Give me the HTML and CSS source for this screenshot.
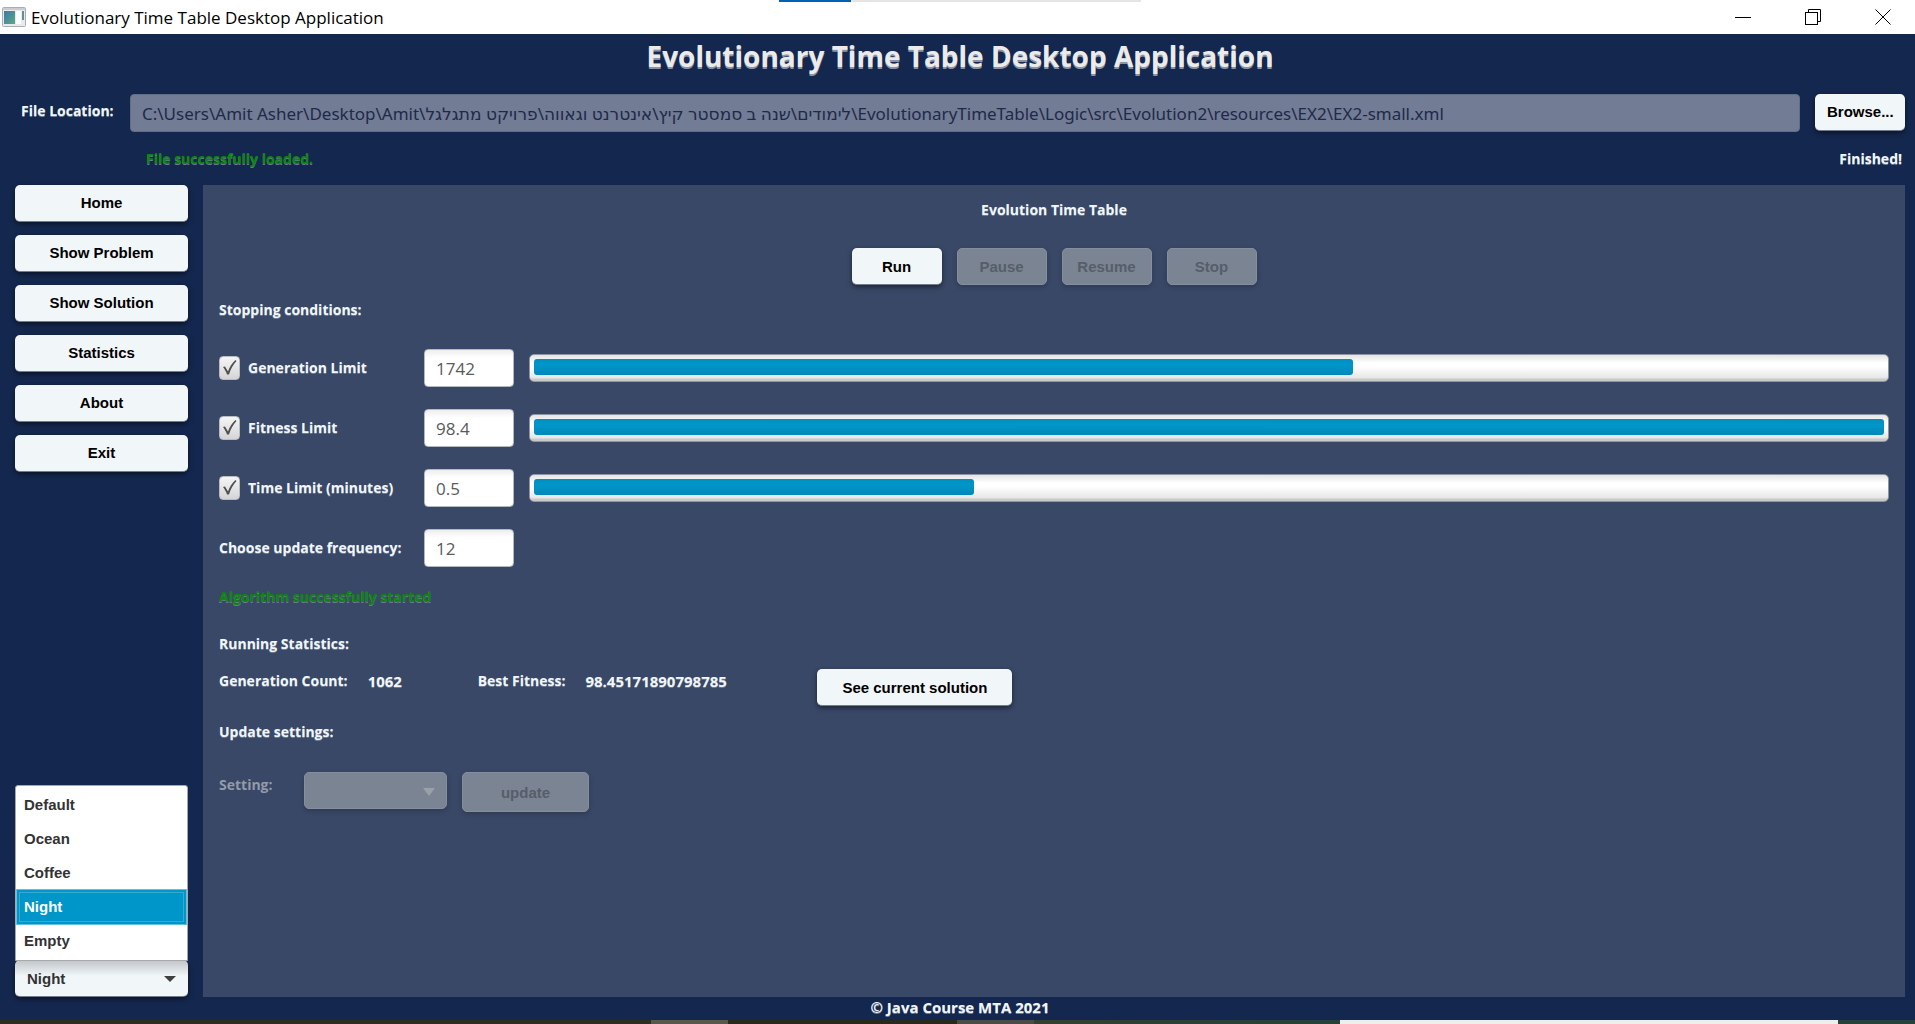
FILE: index.html
```html
<!DOCTYPE html>
<html lang="en">
<head>
<meta charset="utf-8">
<title>Evolutionary Time Table Desktop Application</title>
<link rel="stylesheet" href="styles.css">
</head>
<body>
<div class="window">
  <header class="titlebar">
    <svg class="app-icon" width="24" height="20" viewBox="0 0 24 20" aria-hidden="true">
      <rect x="0.5" y="0.5" width="23" height="19" rx="1" fill="#e9eaec" stroke="#a9adb3"/>
      <rect x="1" y="1" width="22" height="2" fill="#c9ccd2"/>
      <rect x="2" y="4" width="11" height="13" fill="url(#pane)"/>
      <rect x="14" y="4" width="5" height="13" fill="#fff"/>
      <rect x="20" y="4" width="2" height="9" fill="#5f8fa0"/>
      <defs><linearGradient id="pane" x1="0" y1="0" x2="1" y2="1"><stop offset="0" stop-color="#3d78a8"/><stop offset="1" stop-color="#58ab84"/></linearGradient></defs>
    </svg>
    <span class="titlebar-text">Evolutionary Time Table Desktop Application</span>
    <div class="loading"><div class="loading-value"></div></div>
    <div class="window-controls">
      <button class="window-button" type="button" aria-label="Minimize"><svg width="16" height="16" viewBox="0 0 16 16"><path d="M0 8.5H16" stroke="#000"/></svg></button>
      <button class="window-button" type="button" aria-label="Restore"><svg width="16" height="16" viewBox="0 0 16 16" fill="none" stroke="#000"><rect x="0.5" y="3.5" width="12" height="12"/><path d="M3.500 3.500V0.500H15.500V12.500H12.500"/></svg></button>
      <button class="window-button" type="button" aria-label="Close"><svg width="16" height="16" viewBox="0 0 16 16"><path d="M0.500 0.500L15.500 15.500M15.500 0.500L0.500 15.500" stroke="#000"/></svg></button>
    </div>
  </header>

  <div class="app">
    <h1 class="heading">Evolutionary Time Table Desktop Application</h1>

    <div class="file-row">
      <label class="label" for="file">File Location:</label>
      <input class="field file-field" id="file" type="text" disabled value="C:\Users\Amit Asher\Desktop\Amit\לימודים\שנה ב סמסטר קיץ\אינטרנט וגאווה\פרויקט מתגלגל\EvolutionaryTimeTable\Logic\src\Evolution2\resources\EX2\EX2-small.xml">
      <button class="button browse" type="button">Browse...</button>
    </div>
    <div class="status-row">
      <span class="label success">File successfully loaded.</span>
      <span class="label">Finished!</span>
    </div>

    <div class="body">
      <nav class="sidebar">
        <button class="button" type="button">Home</button>
        <button class="button" type="button">Show Problem</button>
        <button class="button" type="button">Show Solution</button>
        <button class="button" type="button">Statistics</button>
        <button class="button" type="button">About</button>
        <button class="button" type="button">Exit</button>
        <div class="theme">
          <select class="button theme-select" aria-label="Theme">
            <option>Default</option>
            <option>Ocean</option>
            <option>Coffee</option>
            <option selected>Night</option>
            <option>Empty</option>
          </select>
          <svg class="arrow" width="12" height="6" viewBox="0 0 12 6" aria-hidden="true"><path d="M0 0H12L6 6Z" fill="#404040"/></svg>
          <ul class="theme-menu" role="listbox" aria-label="Themes">
            <li class="theme-item" role="option">Default</li>
            <li class="theme-item" role="option">Ocean</li>
            <li class="theme-item" role="option">Coffee</li>
            <li class="theme-item selected" role="option" aria-selected="true">Night</li>
            <li class="theme-item" role="option">Empty</li>
          </ul>
        </div>
      </nav>

      <main class="panel">
        <h2 class="label panel-title">Evolution Time Table</h2>
        <div class="actions">
          <button class="button" type="button">Run</button>
          <button class="button" type="button" disabled>Pause</button>
          <button class="button" type="button" disabled>Resume</button>
          <button class="button" type="button" disabled>Stop</button>
        </div>
        <h3 class="label">Stopping conditions:</h3>

        <div class="limits">
          <label class="check label"><input class="checkbox" type="checkbox" checked>Generation Limit</label>
          <input class="field" type="text" value="1742" aria-label="Generation limit value">
          <div class="bar" role="progressbar" aria-label="Generations"><div class="bar-value" style="width:60.7%"></div></div>

          <label class="check label"><input class="checkbox" type="checkbox" checked>Fitness Limit</label>
          <input class="field" type="text" value="98.4" aria-label="Fitness limit value">
          <div class="bar" role="progressbar" aria-label="Fitness"><div class="bar-value" style="width:100%"></div></div>

          <label class="check label"><input class="checkbox" type="checkbox" checked>Time Limit (minutes)</label>
          <input class="field" type="text" value="0.5" aria-label="Time limit value">
          <div class="bar" role="progressbar" aria-label="Time"><div class="bar-value" style="width:32.6%"></div></div>

          <label class="label" for="frequency">Choose update frequency:</label>
          <input class="field" id="frequency" type="text" value="12">
        </div>

        <p class="label success started">Algorithm successfully started</p>

        <h3 class="label">Running Statistics:</h3>
        <div class="stats">
          <span class="label stat-name">Generation Count:</span>
          <span class="label stat-count">1062</span>
          <span class="label stat-name">Best Fitness:</span>
          <span class="label stat-fitness">98.45171890798785</span>
          <button class="button solution" type="button">See current solution</button>
        </div>

        <h3 class="label">Update settings:</h3>
        <div class="settings">
          <label class="label setting-label" for="setting">Setting:</label>
          <div class="setting-box">
            <select class="button setting-select" id="setting" disabled><option></option></select>
            <svg class="arrow" width="12" height="8" viewBox="0 0 12 8" aria-hidden="true"><path d="M0 0H12L6 8Z" fill="#99a0a9"/></svg>
          </div>
          <button class="button update" type="button" disabled>update</button>
        </div>
      </main>
    </div>

    <footer class="label footer">© Java Course MTA 2021</footer>
  </div>
  <div class="desktop-edge"></div>
</div>
</body>
</html>
```
FILE: styles.css
```css
* { box-sizing: border-box; }

body {
  margin: 0;
  font-family: "Open Sans", "Noto Sans", sans-serif;
  color: #f1f6f9;
  background: #14274e;
}

.window { display: flex; flex-direction: column; min-height: 100vh; }

.titlebar {
  position: relative;
  display: flex;
  align-items: center;
  height: 34px;
  padding-left: 2px;
  background: #fff;
  color: #000;
}
.titlebar-text { flex: 1; padding-left: 5px; font-size: 17px; }
.app-icon { flex: none; }
.loading { position: absolute; top: 0; left: 50%; width: 362px; height: 2px; margin-left: -179px; background: #e5e5e5; }
.loading-value { width: 20%; height: 100%; background: #0063b1; }
.window-controls { display: flex; gap: 6px; }
.window-button { width: 64px; height: 34px; padding: 0; border: 0; background: none; }
.window-button svg { display: block; margin: 0 auto; }

.app { flex: 1; display: flex; flex-direction: column; padding: 0 10px 0 15px; }

.heading { margin: 0; height: 60px; font-size: 28px; line-height: 44px; text-align: center; color: #ebebeb; text-shadow: 0 2px #8a93a6; }

.label { margin: 0; font-size: 14px; line-height: 20px; font-weight: bold; text-shadow: 0 1px #6d7a92; }
.success { color: #0a870a; }

.file-row { display: flex; align-items: flex-start; gap: 15px; }
.file-row .label { width: 100px; padding: 7px 0 0 6px; }

.field {
  width: 90px;
  height: 38px;
  padding: 0 11px;
  border: 1px solid #b4b8bf;
  border-radius: 4px;
  background: linear-gradient(#eee, #fff 8px);
  color: #5a5a5a;
  font: 17px "Open Sans", "Noto Sans", sans-serif;
}
.file-field { flex: 1; width: auto; border-color: #626e88; background: #727c94; color: #1e2a4a; font-family: "Noto Sans", "DejaVu Sans", sans-serif; }

.button {
  height: 37px;
  padding: 0 12px;
  border: 0;
  border-bottom: 1px solid #6f7d8f;
  border-radius: 5px;
  background: #f1f6f9;
  color: #000;
  font: bold 15px "Liberation Sans", Arial, sans-serif;
  box-shadow: 0 2px 5px rgba(0, 0, 0, 0.5);
}
.button:disabled {
  border: 1px solid #858d9e;
  background: #7b8493;
  color: #555e69;
  opacity: 1;
  box-shadow: 0 2px 5px rgba(0, 0, 0, 0.2);
}
.browse { width: 90px; padding-bottom: 2px; }

.status-row { display: flex; justify-content: space-between; padding: 17px 3px 16px 131px; }

.body { flex: 1; display: flex; gap: 15px; }

.sidebar { display: flex; flex-direction: column; gap: 13px; width: 173px; }
.sidebar > .button { padding-bottom: 2px; }

.theme { position: relative; margin-top: auto; }
.theme-select { display: block; width: 100%; appearance: none; text-align: left; color: #333; background: linear-gradient(#bfc4c8, #f1f6f9 16px); }
.arrow { position: absolute; right: 12px; top: 16px; }
.theme-menu {
  position: absolute;
  left: 0;
  right: 0;
  bottom: 36px;
  margin: 0;
  padding: 2px 1px;
  list-style: none;
  border: 1px solid #a8a8a8;
  border-radius: 3px 3px 0 0;
  background: #fff;
  color: #333;
  font: bold 15px "Liberation Sans", Arial, sans-serif;
}
.theme-item { height: 34px; padding: 0 7px; line-height: 34px; }
.theme-item.selected { background: #0096c9; color: #fff; outline: 1px solid #66bfdf; box-shadow: inset 0 0 0 2px #0096c9, inset 0 0 0 3px #33abd4; }

.panel { flex: 1; padding: 15px 16px; background: #394867; }
.panel-title { text-align: center; }
.actions { display: flex; justify-content: center; gap: 15px; margin: 28px 0 15px; }
.actions .button { width: 90px; }

.limits { display: grid; grid-template-columns: 190px 90px 1fr; column-gap: 15px; row-gap: 22px; align-items: center; margin-top: 29px; }
.check { display: flex; align-items: center; gap: 8px; }
.checkbox {
  appearance: none;
  width: 21px;
  height: 24px;
  margin: 0;
  border: 1px solid #b9bcc2;
  border-radius: 4px;
  background: url("data:image/svg+xml,%3Csvg xmlns='http://www.w3.org/2000/svg' viewBox='0 0 19 22'%3E%3Cpath d='M3 10L5 9.500L8 14.500C9.500 10 12 6 15.500 3L16.500 4C13 8 10.500 12 9 17.500H7C6 14.500 4.500 12 3 10Z' fill='%23505050'/%3E%3C/svg%3E"), linear-gradient(#f5f5f5, #d5d5d5);
}

.bar { height: 28px; padding: 4px 4px 6px; border: 1px solid #8f95a2; border-radius: 5px; background: linear-gradient(#e4e4e4, #fff 8px, #fff 12px, #e6e6e6 23px, #c9c9c9 24px); }
.bar-value { height: 16px; border-radius: 3px; background: linear-gradient(#008fc0, #0096c9 6px, #0088b8); }

.started { margin: 20px 0 27px; }
.stats { display: flex; align-items: flex-start; height: 37px; margin: 15px 0 16px; }
.stats .label { padding-top: 2px; }
.stat-name { margin-right: 20px; }
.stats .stat-count { width: 110px; font-size: 15px; }
.stats .stat-fitness { width: 232px; font-size: 15px; }
.solution { width: 195px; }

.settings { display: flex; gap: 15px; margin-top: 30px; }
.setting-label { width: 70px; padding-top: 3px; color: #939aa8; text-shadow: none; }
.setting-box { position: relative; width: 143px; }
.setting-select { width: 100%; appearance: none; }
.update { width: 127px; height: 40px; }

.footer { height: 23px; font-size: 15px; text-align: center; }
.desktop-edge { height: 4px; background: linear-gradient(90deg, #2e2f22 34%, #5a574b 34%, #5a574b 38%, #2a291e 38%, #2a291e 50%, #4b4c45 50%, #4b4c45 54%, #33402f 54%, #26403c 70%, #eee 70%, #eee 96%, #26403c 96%); }
```
